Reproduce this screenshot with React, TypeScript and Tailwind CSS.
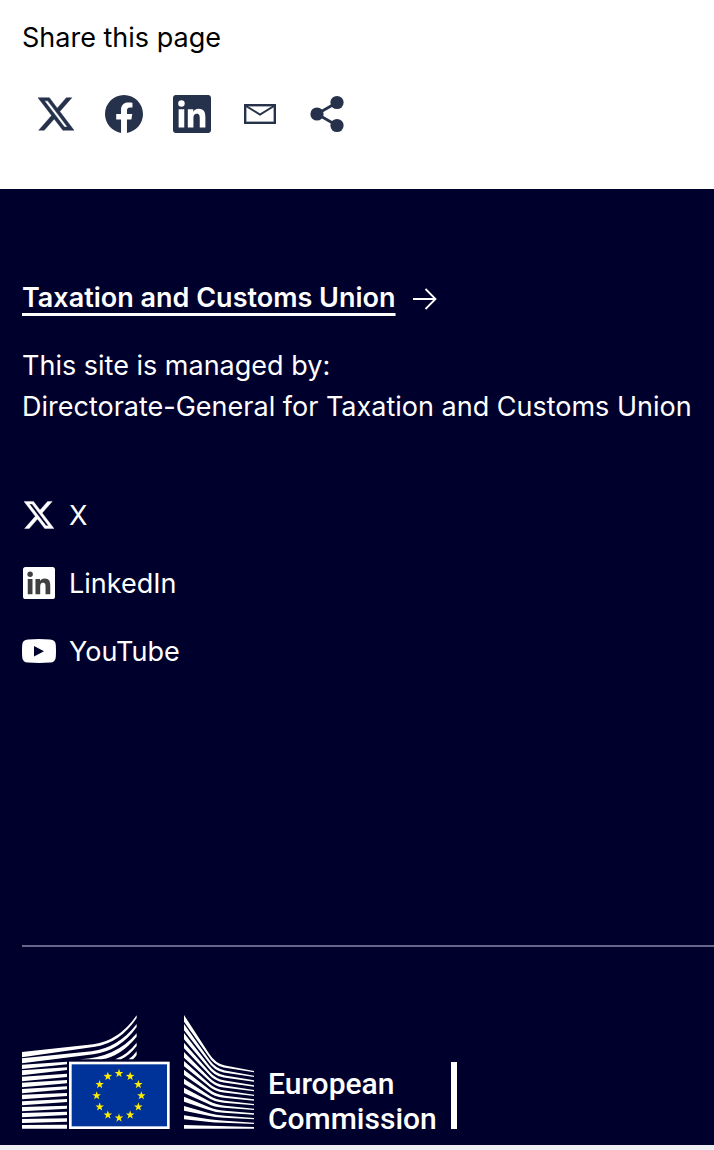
import React from 'react';

const X_PATH =
  'M18.901 1.153h3.68l-8.04 9.19L24 22.846h-7.406l-5.8-7.584-6.638 7.584H.474l8.6-9.83L0 1.154h7.594l5.243 6.932ZM17.61 20.644h2.039L6.486 3.24H4.298Z';
const FACEBOOK_PATH =
  'M24 12.073c0-6.627-5.373-12-12-12s-12 5.373-12 12c0 5.99 4.388 10.954 10.125 11.854v-8.385H7.078v-3.47h3.047V9.43c0-3.007 1.792-4.669 4.533-4.669 1.312 0 2.686.235 2.686.235v2.953H15.83c-1.491 0-1.956.925-1.956 1.874v2.25h3.328l-.532 3.47h-2.796v8.385C19.612 23.027 24 18.062 24 12.073z';
const LINKEDIN_PATH =
  'M20.447 20.452h-3.554v-5.569c0-1.328-.027-3.037-1.852-3.037-1.853 0-2.136 1.445-2.136 2.939v5.667H9.351V9h3.414v1.561h.046c.477-.9 1.637-1.85 3.37-1.85 3.601 0 4.267 2.37 4.267 5.455v6.286zM5.337 7.433a2.062 2.062 0 0 1-2.063-2.065 2.064 2.064 0 1 1 2.063 2.065zm1.782 13.019H3.555V9h3.564v11.452zM22.225 0H1.771C.792 0 0 .774 0 1.729v20.542C0 23.227.792 24 1.771 24h20.451C23.2 24 24 23.227 24 22.271V1.729C24 .774 23.2 0 22.222 0h.003z';

function XIcon({ className }: { className: string }) {
  return (
    <svg viewBox="0 0 24 24" className={className} fill="currentColor" stroke="currentColor" strokeWidth="0.3" aria-hidden="true">
      <path d={X_PATH} />
    </svg>
  );
}

function FacebookIcon() {
  return (
    <svg viewBox="0 0 24 24" className="size-[38px]" fill="currentColor" aria-hidden="true">
      <path d={FACEBOOK_PATH} />
    </svg>
  );
}

function LinkedInIcon({ className, inner }: { className: string; inner?: string }) {
  return (
    <svg viewBox="0 0 24 24" className={className} fill="currentColor" aria-hidden="true">
      {inner && <rect x="2" y="2" width="20" height="20" fill={inner} />}
      <path d={LINKEDIN_PATH} />
    </svg>
  );
}

function MailIcon() {
  return (
    <svg viewBox="0 0 32 20" className="h-5 w-8" fill="none" stroke="currentColor" strokeWidth="2.4" aria-hidden="true">
      <rect x="1.2" y="1.2" width="29.6" height="17.6" />
      <path d="M2 2l14 8.6L30 2" strokeWidth="2" />
    </svg>
  );
}

function ShareIcon() {
  return (
    <svg viewBox="0 0 36 38" className="h-[38px] w-9" fill="currentColor" aria-hidden="true">
      <path d="M27 7.500L7 19L27 30.500" fill="none" stroke="currentColor" strokeWidth="2.800" />
      <circle cx="27" cy="7.500" r="6.600" />
      <circle cx="7" cy="19" r="6.600" />
      <circle cx="27" cy="30.500" r="6.600" />
    </svg>
  );
}

function YouTubeIcon() {
  return (
    <svg viewBox="0 0 34 24" className="h-6 w-[34px]" fill="currentColor" fillRule="evenodd" aria-hidden="true">
      <path d="M6 .4Q17-.4 28 .4Q33.600.6 33.800 6Q34.200 12 33.800 18Q33.600 23.400 28 23.600Q17 24.400 6 23.600Q.4 23.400.2 18Q-.2 12 .2 6Q.4.6 6 .4ZM12 7v10.500l10-5.250Z" />
    </svg>
  );
}

// left building: [left top, left bottom, right top, right bottom]
const leftBars = [
  [179, 192, 170, 178],
  [196, 211, 187, 195],
  [215, 229, 206, 216],
  [233, 247, 225, 235],
  [252, 265, 244, 253],
  [269, 283, 264, 273],
  [289, 301, 282, 291],
  [306, 319, 302, 311],
  [324, 337, 320, 330],
  [342, 354, 340, 350],
  [360, 371, 359, 371],
];

// right building: [left top, left bottom, right end]
const rightBars = [
  [30, 50, 198],
  [57, 76, 212],
  [84, 103, 226],
  [113, 130, 241],
  [141, 158, 255],
  [168, 184, 269],
  [194, 210, 283],
  [221, 237, 297],
  [248, 264, 311],
  [275, 290, 325],
  [303, 317, 339],
  [331, 343, 353],
  [360, 371, 366],
];

function rightBar([top, bottom, end]: number[], i: number) {
  if (i === rightBars.length - 1) {
    return `M522 ${top}L732 ${end}V371H522Z`;
  }
  const knee = 176 + i * 15.4;
  const t = (k: number) => top + (knee - top) * k;
  const b = (k: number) => bottom + (knee + 7 - bottom) * k;
  return (
    `M522 ${top}L598 ${t(0.8)}Q617 ${knee} 645 ${knee + (end - knee) * 0.24}L732 ${end}` +
    `V${end + 4}L641 ${knee + 7 + (end - knee - 3) * 0.22}Q613 ${knee + 7} 592 ${b(0.74)}L522 ${bottom}Z`
  );
}

function star(cx: number, cy: number) {
  return Array.from({ length: 10 }, (_, i) => {
    const r = i % 2 ? 5.4 : 13.5;
    const a = (Math.PI * i) / 5;
    return `${cx + r * Math.sin(a)},${cy - r * Math.cos(a)}`;
  }).join(' ');
}

function CommissionEmblem() {
  return (
    <svg viewBox="36 30 696 342" className="h-[114px] w-[232px] shrink-0" fill="white" aria-hidden="true">
      <path d="M36 141L250 118Q327 107 380 31V39Q330 114 255 125L36 157Z" />
      <path d="M36 160L245 139Q325 128 380 57V66Q330 137 250 148L36 175Z" />
      <path d="M210 163Q318 158 380 85V95Q332 154 275 163Z" />
      <path d="M316 163Q354 147 380 113V123Q358 152 333 163Z" />
      <path d="M356 163Q370 153 380 139V150Q375 158 369 163Z" />
      {leftBars.map(([lt, lb, rt, rb]) => (
        <path key={lt} d={`M36 ${lt}L171 ${rt}V${rb}L36 ${lb}Z`} />
      ))}
      <rect x="177" y="170" width="302" height="202" />
      <rect x="185" y="178" width="286" height="186" fill="#003399" />
      {Array.from({ length: 12 }, (_, i) => (
        <polygon
          key={i}
          points={star(327 + 67 * Math.sin((Math.PI * i) / 6), 272 - 67 * Math.cos((Math.PI * i) / 6))}
          fill="#ffed00"
        />
      ))}
      {rightBars.map((bar, i) => (
        <path key={i} d={rightBar(bar, i)} />
      ))}
    </svg>
  );
}

const shareLinks = [
  { label: 'Share on X', icon: <XIcon className="size-9" /> },
  { label: 'Share on Facebook', icon: <FacebookIcon /> },
  { label: 'Share on LinkedIn', icon: <LinkedInIcon className="size-[38px]" /> },
  { label: 'Share by email', icon: <MailIcon /> },
  { label: 'More share options', icon: <ShareIcon /> },
];

const socialLinks = [
  { label: 'X', icon: <XIcon className="size-[30px]" /> },
  { label: 'LinkedIn', icon: <LinkedInIcon className="size-8" inner="#404040" /> },
  { label: 'YouTube', icon: <YouTubeIcon /> },
];

export default function App() {
  return (
    <div className="min-h-screen bg-[#eeeff3] font-['Inter',sans-serif] text-[27px] leading-[41px]">
      <section className="bg-white px-[22px] pt-[17px] pb-[41px] text-black">
        <h2>Share this page</h2>
        <div className="mt-[22px] flex text-[#26324b]">
          {shareLinks.map((item) => (
            <button key={item.label} type="button" aria-label={item.label} className="flex size-[68px] items-center justify-center">
              {item.icon}
            </button>
          ))}
        </div>
      </section>

      <footer className="bg-[#00002d] pt-[88px] pb-4 pl-[22px] text-white">
        <a href="#" className="inline-flex items-center gap-[17px] align-top font-semibold">
          <span className="underline decoration-3 underline-offset-[6px]">Taxation and Customs Union</span>
          <svg viewBox="0 0 24 22" className="mt-0.5 h-[22px] w-6" fill="none" stroke="currentColor" strokeWidth="1.800" aria-hidden="true">
            <path d="M0 11h22.500M12.500 1l10 10-10 10" />
          </svg>
        </a>
        <p className="mt-[27px]">
          This site is managed by:
          <br />
          Directorate-General for Taxation and Customs Union
        </p>

        <ul className="mt-[54px]">
          {socialLinks.map((item) => (
            <li key={item.label}>
              <a href="#" className="inline-flex h-[68px] items-center gap-[13px] align-top">
                <span className="flex w-[34px] justify-center">{item.icon}</span>
                {item.label}
              </a>
            </li>
          ))}
        </ul>

        <hr className="mt-[260px] border-t-2 border-[#66668a]" />

        <div className="mt-[68px] flex items-end">
          <CommissionEmblem />
          <div className="-mb-[7px] ml-[14px] font-['Roboto',sans-serif] text-[30px] leading-[35px] font-medium">
            European
            <br />
            Commission
          </div>
          <div className="ml-[14px] h-[67px] w-[6px] bg-white" />
        </div>
      </footer>
    </div>
  );
}
